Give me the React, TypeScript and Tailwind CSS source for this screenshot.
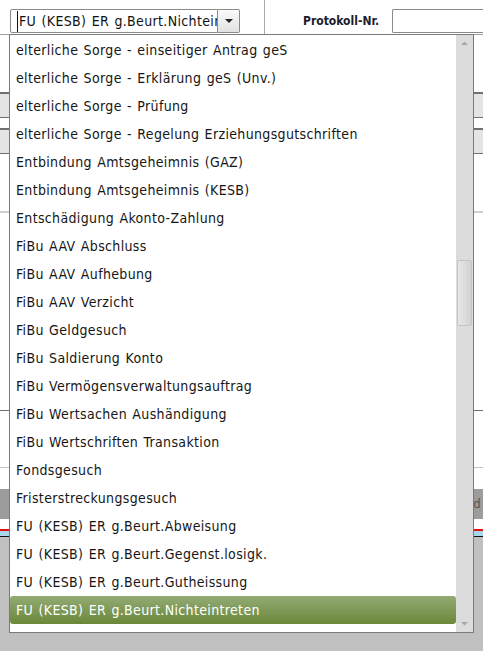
import React from "react";

const items = [
  "elterliche Sorge - einseitiger Antrag geS",
  "elterliche Sorge - Erklärung geS (Unv.)",
  "elterliche Sorge - Prüfung",
  "elterliche Sorge - Regelung Erziehungsgutschriften",
  "Entbindung Amtsgeheimnis (GAZ)",
  "Entbindung Amtsgeheimnis (KESB)",
  "Entschädigung Akonto-Zahlung",
  "FiBu AAV Abschluss",
  "FiBu AAV Aufhebung",
  "FiBu AAV Verzicht",
  "FiBu Geldgesuch",
  "FiBu Saldierung Konto",
  "FiBu Vermögensverwaltungsauftrag",
  "FiBu Wertsachen Aushändigung",
  "FiBu Wertschriften Transaktion",
  "Fondsgesuch",
  "Fristerstreckungsgesuch",
  "FU (KESB) ER g.Beurt.Abweisung",
  "FU (KESB) ER g.Beurt.Gegenst.losigk.",
  "FU (KESB) ER g.Beurt.Gutheissung",
  "FU (KESB) ER g.Beurt.Nichteintreten",
  "FU (KESB) ER g.Beurt.Rückzug",
];

const selected = "FU (KESB) ER g.Beurt.Nichteintreten";

function Listbox() {
  return (
    <div className="absolute left-[9px] top-[34px] w-[465px] h-[599px] border border-[#7a7a7a] bg-white flex overflow-hidden">
      <div className="flex-1 pt-px overflow-hidden">
        {items.map((t) => (
          <div
            key={t}
            className={
              t === selected
                ? "h-[28px] flex items-center pl-[6px] text-white rounded-[3px] bg-gradient-to-b from-[#93ab74] to-[#6a8838] whitespace-nowrap"
                : "h-[28px] flex items-center pl-[6px] text-[#161616] whitespace-nowrap"
            }
          >
            {t}
          </div>
        ))}
      </div>
      <div className="w-[17px] bg-[#dcdcdc] relative">
        <svg className="absolute left-[4px] top-[6px]" width="9" height="5" viewBox="0 0 9 5">
          <path d="M4.5 0.5 L8 4 L1 4 Z" fill="#a8a8a8" />
        </svg>
        <div className="absolute left-px top-[225px] w-[15px] h-[66px] rounded-[2px] border border-[#c4c4c4] bg-gradient-to-r from-[#e6e6e6] to-[#d2d2d2]" />
        <svg className="absolute left-[4px] bottom-[6px]" width="9" height="5" viewBox="0 0 9 5">
          <path d="M1 1 L8 1 L4.5 4.5 Z" fill="#a8a8a8" />
        </svg>
      </div>
    </div>
  );
}

export default function App() {
  return (
    <div
      className="relative w-[483px] h-[651px] overflow-hidden bg-white text-[14px] tracking-[0.35px] [word-spacing:1px]"
      style={{ fontFamily: "'DejaVu Sans Condensed', 'DejaVu Sans', Tahoma, sans-serif" }}
    >
      {/* top toolbar */}
      <div className="h-[34px] flex items-end pb-px">
        <div className="ml-[10px] flex h-[24px]">
          <div className="w-[208px] h-full border border-[#8a8a8a] rounded-l-[2px] bg-white flex items-center pl-[6px] overflow-hidden whitespace-nowrap text-[#111]">
            <span className="border-l border-[#111] pl-px">FU (KESB) ER g.Beurt.Nichtein</span>
          </div>
          <div className="w-[22px] h-full border border-l-0 border-[#8a8a8a] rounded-r-[2px] bg-gradient-to-b from-[#fafafa] to-[#e2e2e2] flex items-center justify-center">
            <svg width="8" height="4" viewBox="0 0 8 4">
              <path d="M0 0 L8 0 L4 4 Z" fill="#222" />
            </svg>
          </div>
        </div>
        <div className="ml-[24px] w-px h-[34px] -mb-px bg-[#a8a8a8]" />
        <div className="ml-[38px] h-[24px] flex items-center text-[12px] font-bold tracking-normal [word-spacing:0px] text-[#1c1c2c]">
          Protokoll-Nr.
        </div>
        <div className="ml-[13px] flex-1 h-[24px] border border-[#8a8a8a] rounded-l-[2px] border-r-0" />
      </div>

      {/* page behind the open dropdown */}
      <div className="border-t border-[#a0a0a0]">
        <div className="h-[57px]" />
        <div className="h-[26px] border-t-2 border-b border-t-[#707070] border-b-[#707070] bg-[#e4e4e4]" />
        <div className="h-[10px]" />
        <div className="h-[26px] border-t-2 border-b border-t-[#707070] border-b-[#707070] bg-[#e4e4e4]" />
        <div className="h-[57px]" />
        <div className="h-[199px] border-t-2 border-[#cfcfcf]" />
        <div className="h-[57px] border-t border-[#707070]" />
        <div className="h-[22px] border-t border-[#c4c4c4]" />
        <div className="h-[30px] bg-[#9c9c9c] flex items-center justify-end pr-[2px] text-[#555] text-[13px]">
          d
        </div>
        <div className="h-[10px]" />
        <div className="h-[2px] bg-[#e01010]" />
        <div className="h-[5px] bg-[#a9d6ea]" />
        <div className="h-px bg-[#111]" />
        <div className="h-[200px] bg-[#c0c0c0]" />
      </div>

      <Listbox />
    </div>
  );
}
